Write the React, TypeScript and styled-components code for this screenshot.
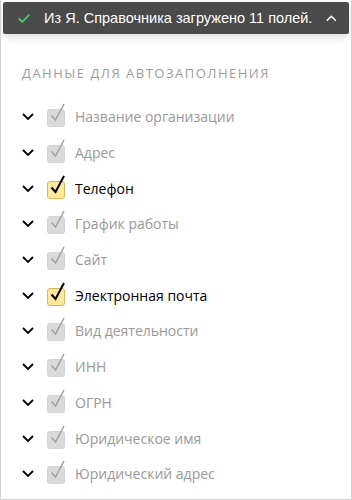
import styled, { createGlobalStyle } from 'styled-components';

const fields: { name: string, active: boolean }[] = [
    { name: 'Название организации', active: false },
    { name: 'Адрес', active: false },
    { name: 'Телефон', active: true },
    { name: 'График работы', active: false },
    { name: 'Сайт', active: false },
    { name: 'Электронная почта', active: true },
    { name: 'Вид деятельности', active: false },
    { name: 'ИНН', active: false },
    { name: 'ОГРН', active: false },
    { name: 'Юридическое имя', active: false },
    { name: 'Юридический адрес', active: false },
];

export default function App(): JSX.Element {
    return (
        <>
            <GlobalStyle />
            <Panel>
                <Toast>
                    <svg width="16" height="13" viewBox="0 0 16 13">
                        <path d="M1 6.5 L5.8 11 L15 1.5" fill="none" stroke="#4fc46d" strokeWidth="2.4" />
                    </svg>
                    <ToastText>Из Я. Справочника загружено 11 полей.</ToastText>
                    <svg width="14" height="9" viewBox="0 0 14 9">
                        <path d="M1 7.5 L7 1.5 L13 7.5" fill="none" stroke="#fff" strokeWidth="2" />
                    </svg>
                </Toast>
                <Body>
                    <Title>Данные для автозаполнения</Title>
                    <List>
                        {fields.map((field) => (
                            <Row key={field.name}>
                                <svg width="12" height="7" viewBox="0 0 12 7">
                                    <path d="M1 1 L6 6 L11 1" fill="none" stroke="#000" strokeWidth="1.8" />
                                </svg>
                                <Checkbox $active={field.active}>
                                    <CheckMark width="16" height="22" viewBox="0 0 16 22">
                                        <path
                                            d="M2.5 12.5 L6.5 17 L15 1"
                                            fill="none"
                                            stroke={field.active ? '#000' : '#a0a0a0'}
                                            strokeWidth={field.active ? 2 : 1.5}
                                        />
                                    </CheckMark>
                                </Checkbox>
                                <Label $active={field.active}>{field.name}</Label>
                            </Row>
                        ))}
                    </List>
                </Body>
            </Panel>
        </>
    )
}

const GlobalStyle = createGlobalStyle`
    body {
        margin: 0;
        background: #fff;
    }
`;

const Panel = styled.div`
    width: 352px;
    height: 500px;
    box-sizing: border-box;
    border: 1px solid #d2d2d2;
    border-top: none;
    padding: 2px 1px 0 1px;
    font-family: "Liberation Sans", Arial, sans-serif;
    overflow: hidden;
`;

const Toast = styled.div`
    height: 32px;
    margin: 0 1px;
    display: flex;
    align-items: center;
    gap: 14px;
    padding: 0 12px 0 15px;
    background: #4a4a4a;
    border-radius: 2px;
    box-shadow: 0 4px 8px rgba(0, 0, 0, 0.12);
`;

const ToastText = styled.span`
    flex: 1;
    color: #fff;
    font-size: 14.5px;
    white-space: nowrap;
`;

const Body = styled.div`
    padding: 30px 0 0 20px;
`;

const Title = styled.div`
    font-family: "Open Sans", sans-serif;
    font-size: 13px;
    letter-spacing: 1.5px;
    text-transform: uppercase;
    color: #9c9c9c;
    line-height: 18px;
`;

const List = styled.div`
    margin-top: 17px;
    display: flex;
    flex-direction: column;
`;

const Row = styled.div`
    height: 35.7px;
    display: flex;
    align-items: center;
    gap: 13px;
`;

const Checkbox = styled.div<{ $active: boolean }>`
    position: relative;
    width: 18px;
    height: 18px;
    box-sizing: border-box;
    border-radius: 3px;
    background: ${(p) => (p.$active ? '#ffe89a' : '#dadada')};
    border: 1px solid ${(p) => (p.$active ? '#d6bb5e' : '#d4d4d4')};
    margin-top: 3px;
`;

const CheckMark = styled.svg`
    position: absolute;
    left: 1px;
    top: -7px;
`;

const Label = styled.span<{ $active: boolean }>`
    font-family: "Open Sans", sans-serif;
    font-size: 14px;
    color: ${(p) => (p.$active ? '#000' : '#999')};
    margin-left: -3px;
`;
